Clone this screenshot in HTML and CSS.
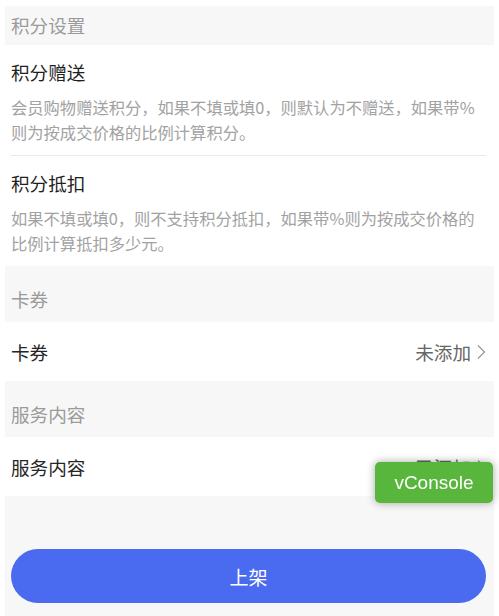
FILE: index.html
```html
<!DOCTYPE html>
<html lang="zh-CN">
<head>
    <meta charset="UTF-8">
    <meta name="viewport" content="width=device-width, initial-scale=1.0">
    <title>商品设置</title>
    <link rel="stylesheet" href="styles.css">
</head>
<body>
    <div class="page">
        <div class="section-title section-title--top">积分设置</div>
        <div class="panel">
            <div class="field">
                <div class="field-name">积分赠送</div>
                <p class="field-desc">会员购物赠送积分，如果不填或填0，则默认为不赠送，如果带%则为按成交价格的比例计算积分。</p>
            </div>
            <div class="field">
                <div class="field-name">积分抵扣</div>
                <p class="field-desc">如果不填或填0，则不支持积分抵扣，如果带%则为按成交价格的比例计算抵扣多少元。</p>
            </div>
        </div>

        <div class="section-title">卡券</div>
        <div class="panel">
            <div class="row">
                <span class="row-label">卡券</span>
                <span class="row-value">未添加
                    <svg class="chevron" width="10" height="16" viewBox="0 0 10 16"><polyline points="2,1.5 8.5,8 2,14.5" fill="none" stroke="#9a9a9a" stroke-width="1.3"/></svg>
                </span>
            </div>
        </div>

        <div class="section-title">服务内容</div>
        <div class="panel">
            <div class="row">
                <span class="row-label">服务内容</span>
                <span class="row-value">已添加
                    <svg class="chevron" width="10" height="16" viewBox="0 0 10 16"><polyline points="2,1.5 8.5,8 2,14.5" fill="none" stroke="#9a9a9a" stroke-width="1.3"/></svg>
                </span>
            </div>
        </div>

        <div class="footer">
            <button class="submit">上架</button>
        </div>
    </div>

    <div class="vconsole">vConsole</div>
</body>
</html>
```

FILE: styles.css
```css
body {
    margin: 0;
    background-color: #fff;
    font-family: "Noto Sans CJK SC", "Noto Sans", sans-serif;
}
.page {
    margin: 6px 5px 0;
    min-height: 610px;
    background-color: #f7f7f7;
}
.section-title {
    padding: 20px 8px 10px 6px;
    font-size: 18.6px;
    line-height: 26px;
    color: #9b9b9b;
}
.section-title--top {
    padding-top: 6px;
    padding-bottom: 7px;
}
.panel {
    background-color: #fff;
    padding: 0 8px 0 6px;
}
.field {
    padding: 14px 0 10px;
}
.field + .field {
    border-top: 1px solid #e9e9e9;
}
.field-name {
    font-size: 18.6px;
    line-height: 26px;
    color: #1f1f1f;
    margin-bottom: 10px;
}
.field-desc {
    margin: 0;
    font-size: 16.3px;
    line-height: 25px;
    color: #a2a2a2;
}
.row {
    height: 59px;
    display: flex;
    justify-content: space-between;
    align-items: center;
    font-size: 18.6px;
    line-height: 26px;
}
.row-label {
    color: #262626;
}
.row-value {
    display: flex;
    align-items: center;
    gap: 5px;
    color: #666;
}
.chevron {
    display: block;
}
.footer {
    padding: 53px 8px 12px 6px;
}
.submit {
    display: block;
    width: 100%;
    height: 54px;
    border: none;
    border-radius: 27px;
    background-color: #4a6bf0;
    color: #fff;
    font-family: inherit;
    font-size: 19px;
}
.vconsole {
    position: fixed;
    top: 462px;
    right: 6px;
    width: 118px;
    height: 41px;
    display: flex;
    justify-content: center;
    align-items: center;
    background-color: #57b63b;
    border-radius: 5px;
    box-shadow: 0 0 8px rgba(0, 0, 0, 0.35);
    color: #fff;
    font-family: "Liberation Sans", Arial, sans-serif;
    font-size: 19px;
}
```
